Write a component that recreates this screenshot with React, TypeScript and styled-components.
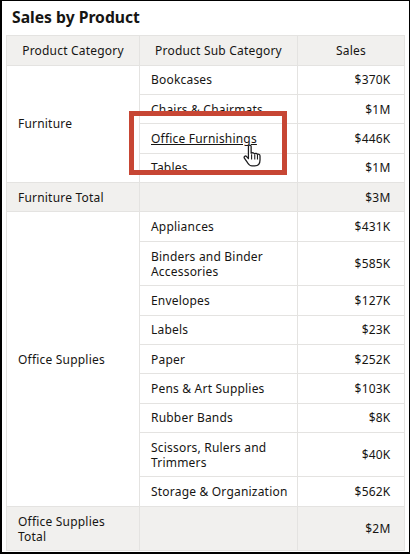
import styled, { createGlobalStyle } from 'styled-components'

const GlobalStyle = createGlobalStyle`
  html, body {
    margin: 0;
    padding: 0;
    background: #fff;
  }
`

const Frame = styled.div`
  position: relative;
  box-sizing: border-box;
  width: 410px;
  height: 554px;
  overflow: hidden;
  background: #fff;
  border-style: solid;
  border-color: #000;
  border-width: 1px 1px 2px 2px;
  padding: 0 4px;
  font-family: 'Noto Sans', 'Open Sans', sans-serif;
  color: #161513;
`

const Title = styled.h2`
  margin: 0;
  height: 34px;
  padding-left: 6px;
  font-size: 15.7px;
  line-height: 32px;
  font-weight: 700;
`

const Table = styled.table`
  width: 398px;
  table-layout: fixed;
  border-collapse: collapse;
  font-size: 12px;
  line-height: 15px;
  letter-spacing: 0.2px;
`

const Head = styled.th`
  height: 28.6px;
  padding: 0;
  background: #f1f0ee;
  border: 1px solid #e4e3e1;
  font-weight: 400;
  text-align: center;
`

const Cell = styled.td<{ $total?: boolean; $right?: boolean }>`
  padding: 6.7px ${(p) => (p.$right ? '13.5px' : '8px')} 6.7px 11px;
  border: 1px solid #e4e3e1;
  background: ${(p) => (p.$total ? '#f1f0ee' : '#fff')};
  text-align: ${(p) => (p.$right ? 'right' : 'left')};
`

const SubLink = styled.a`
  color: inherit;
  text-decoration: underline;
`

const Callout = styled.div`
  position: absolute;
  left: 127px;
  top: 110px;
  width: 158px;
  height: 64px;
  box-sizing: border-box;
  border: 5px solid #c74634;
`

const Pointer = styled.svg`
  position: absolute;
  left: 241px;
  top: 142px;
  width: 19px;
  height: 25px;
`

type Row = { sub: string; sales: string }

const furniture: Row[] = [
  { sub: 'Bookcases', sales: '$370K' },
  { sub: 'Chairs & Chairmats', sales: '$1M' },
  { sub: 'Office Furnishings', sales: '$446K' },
  { sub: 'Tables', sales: '$1M' },
]

const supplies: Row[] = [
  { sub: 'Appliances', sales: '$431K' },
  { sub: 'Binders and Binder Accessories', sales: '$585K' },
  { sub: 'Envelopes', sales: '$127K' },
  { sub: 'Labels', sales: '$23K' },
  { sub: 'Paper', sales: '$252K' },
  { sub: 'Pens & Art Supplies', sales: '$103K' },
  { sub: 'Rubber Bands', sales: '$8K' },
  { sub: 'Scissors, Rulers and Trimmers', sales: '$40K' },
  { sub: 'Storage & Organization', sales: '$562K' },
]

const Group = ({ name, rows, total }: { name: string; rows: Row[]; total: string }) => (
  <>
    {rows.map((row, i) => (
      <tr key={row.sub}>
        {i === 0 && <Cell rowSpan={rows.length}>{name}</Cell>}
        <Cell>
          {row.sub === 'Office Furnishings' ? <SubLink>{row.sub}</SubLink> : row.sub}
        </Cell>
        <Cell $right>{row.sales}</Cell>
      </tr>
    ))}
    <tr>
      <Cell $total>{name} Total</Cell>
      <Cell $total />
      <Cell $total $right>
        {total}
      </Cell>
    </tr>
  </>
)

const App = () => (
  <>
    <GlobalStyle />
    <Frame>
      <Title>Sales by Product</Title>
      <Table>
        <colgroup>
          <col style={{ width: 133 }} />
          <col style={{ width: 158 }} />
          <col style={{ width: 107 }} />
        </colgroup>
        <thead>
          <tr>
            <Head>Product Category</Head>
            <Head>Product Sub Category</Head>
            <Head>Sales</Head>
          </tr>
        </thead>
        <tbody>
          <Group name="Furniture" rows={furniture} total="$3M" />
          <Group name="Office Supplies" rows={supplies} total="$2M" />
        </tbody>
      </Table>
      <Callout />
      <Pointer viewBox="0 0 21 27">
        <path
          d="M6 3.500c0-2 3-2 3 0V11c2-1 3-.5 3.500 .5 1.500-.8 3-.3 3.300 .8 1.700-.6 3 .3 3 1.700v4.500c0 4-2 6.500-5.800 6.500H10c-2.500 0-3.800-1.500-5-3.500L1.500 16.500c-1-2 1.300-3.200 2.500-1.800L6 17z"
          fill="#fff"
          stroke="#1d1d1f"
          strokeWidth="1.400"
          strokeLinejoin="round"
        />
        <path d="M9.500 12v6M13 12v6M16 13v5" stroke="#1d1d1f" strokeWidth="1.200" fill="none" />
      </Pointer>
    </Frame>
  </>
)

export default App
